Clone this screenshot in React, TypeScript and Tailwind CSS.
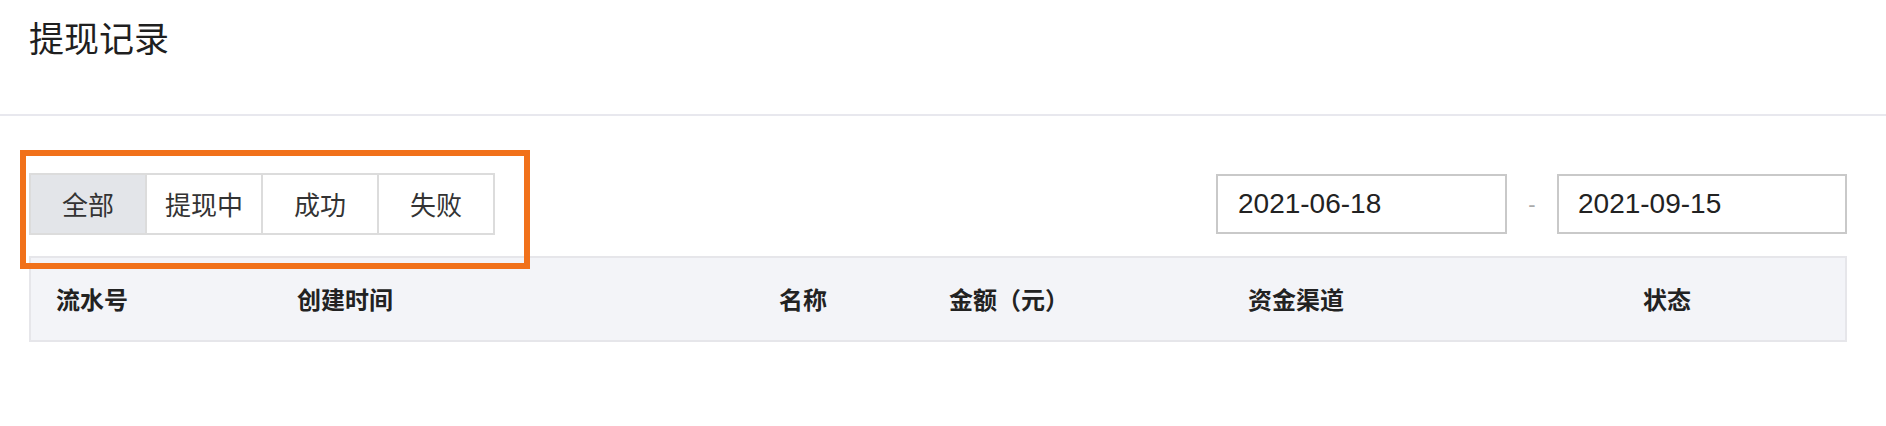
import React, { useState } from 'react';

const CJK = "font-['Noto_Sans_CJK_SC','Noto_Sans',sans-serif]";

const TABS = ['全部', '提现中', '成功', '失败'];

const COLUMNS: { label: string; width: string }[] = [
  { label: '流水号', width: 'w-[241px]' },
  { label: '创建时间', width: 'w-[482px]' },
  { label: '名称', width: 'w-[170px]' },
  { label: '金额（元）', width: 'w-[299px]' },
  { label: '资金渠道', width: 'w-[395px]' },
  { label: '状态', width: 'flex-1' },
];

export default function App() {
  const [activeTab, setActiveTab] = useState(0);
  const [startDate, setStartDate] = useState('2021-06-18');
  const [endDate, setEndDate] = useState('2021-09-15');

  return (
    <div className={`relative min-h-screen bg-white ${CJK}`}>
      {/* Page header */}
      <header className="h-[116px] border-b-2 border-[#e8e8ee] pl-[29px] pt-[19px]">
        <h1 className="text-[35px] leading-[35px] font-normal text-[#1f1f1f]">提现记录</h1>
      </header>

      <main className="pl-[29px] pr-[39px] pt-[57px]">
        {/* Filters */}
        <div className="flex items-center justify-between h-[62px]">
          <div className="flex h-[62px] border-2 border-[#dcdcdc]">
            {TABS.map((tab, idx) => (
              <button
                key={tab}
                onClick={() => setActiveTab(idx)}
                className={`h-full text-[26px] leading-none text-[#333] ${
                  idx > 0 ? 'w-[116px] border-l-2 border-[#dcdcdc]' : 'w-[114px]'
                } ${activeTab === idx ? 'bg-[#e3e5e9]' : 'bg-white'}`}
              >
                {tab}
              </button>
            ))}
          </div>

          <div className="flex items-center">
            <input
              value={startDate}
              onChange={(e) => setStartDate(e.target.value)}
              className="w-[291px] h-[60px] border-2 border-[#c9c9c9] pl-[20px] text-[28px] text-[#222] font-['Liberation_Sans',sans-serif] outline-none"
            />
            <span className="w-[50px] text-center text-[22px] text-[#aaa] font-['Liberation_Sans',sans-serif]">-</span>
            <input
              value={endDate}
              onChange={(e) => setEndDate(e.target.value)}
              className="w-[290px] h-[60px] border-2 border-[#c9c9c9] pl-[19px] text-[28px] text-[#222] font-['Liberation_Sans',sans-serif] outline-none"
            />
          </div>
        </div>

        {/* Table header */}
        <div className="mt-[21px] h-[86px] flex items-center border-2 border-[#e6e6ea] bg-[#f3f4f8] pl-[25px]">
          {COLUMNS.map((col) => (
            <div key={col.label} className={`${col.width} text-[24px] font-bold text-[#222]`}>
              {col.label}
            </div>
          ))}
        </div>
      </main>

      {/* Annotation highlight */}
      <div className="absolute left-[20px] top-[150px] w-[510px] h-[119px] border-[6px] border-[#f1711a] pointer-events-none" />
    </div>
  );
}
